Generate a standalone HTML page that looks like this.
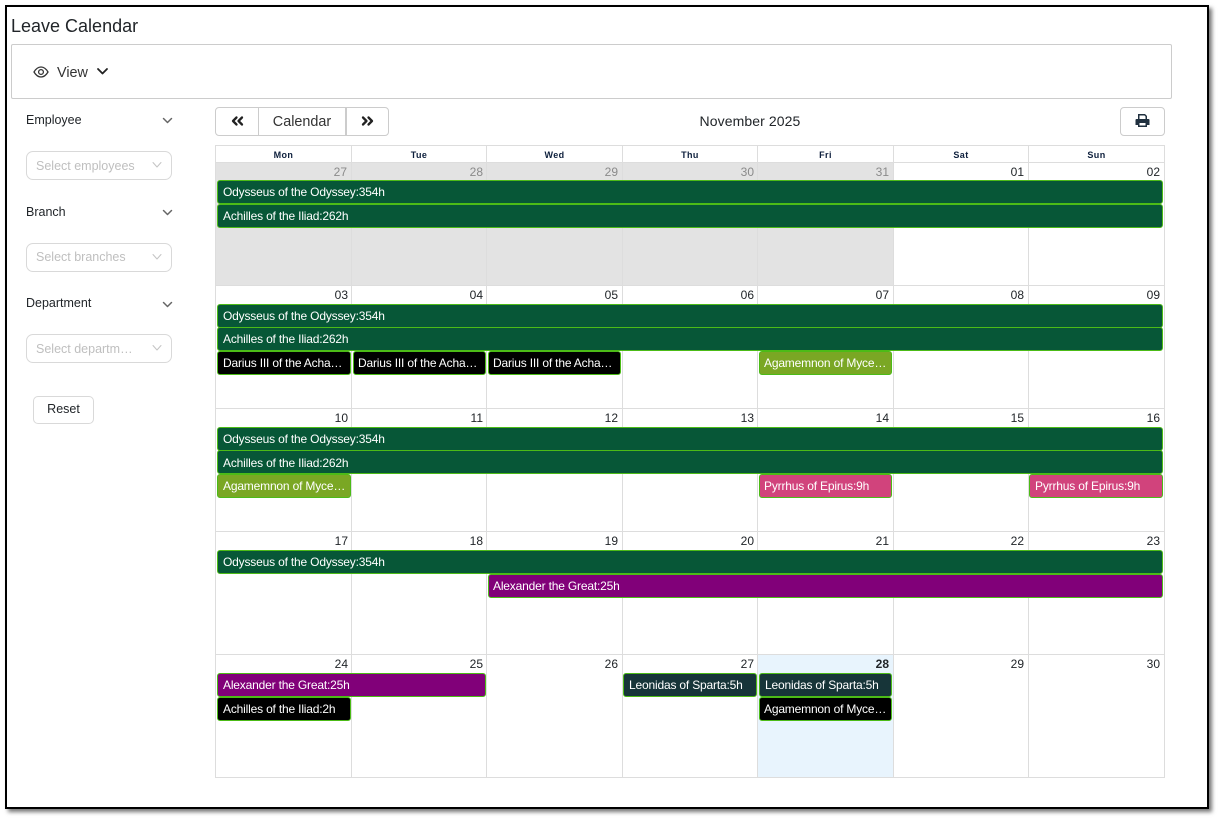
<!DOCTYPE html>
<html><head><meta charset="utf-8"><style>
*{box-sizing:border-box}
html,body{margin:0;padding:0;background:#fff;width:1218px;height:818px;overflow:hidden;font-family:"Liberation Sans",sans-serif;color:#212529}
.a{position:absolute}
.frame{left:5px;top:5px;width:1204px;height:804px;border:2px solid #000;box-shadow:3px 3px 4px #777;background:#fff}
.lbl{font-size:12.5px;left:26px;color:#212529;line-height:14px}
.sel{left:26px;width:146px;height:29px;border:1px solid #d9d9d9;border-radius:7px;color:#bfbfbf;font-size:12.500px;line-height:27px;padding-left:9px}
.v{stroke-linecap:round;stroke-linejoin:round;fill:none}
.hd{top:145px;height:18px;border:1px solid #ddd;font-size:9px;font-weight:bold;text-align:center;line-height:18px;color:#0d1f3c;letter-spacing:.4px}
.hl{height:1px;background:#ddd;left:215px;width:950px}
.vl{width:1px;background:#ddd;top:145px;height:633px}
.n{font-size:12px;width:40px;text-align:right;line-height:14px;color:#212529}
.e{height:24px;border:1px solid #4cbb17;border-radius:3px;color:#fff;font-size:12px;letter-spacing:-.18px;line-height:22px;padding-left:5px;white-space:nowrap;overflow:hidden}
.s{padding-left:4px}
.g{background:#075737}.k{background:#000}.o{background:#7aa724}.p{background:#d1437c}.m{background:#810079}.t{background:#173539}
</style></head><body>
<div class="a frame"></div>
<div class="a" style="left:11px;top:15px;font-size:18px;line-height:22px;color:#212529">Leave Calendar</div>
<div class="a" style="left:11px;top:44px;width:1161px;height:55px;border:1px solid #ccc;border-radius:2px"></div>
<svg class="a" style="left:33px;top:65px" width="16" height="14" viewBox="0 0 16 14"><path d="M1 7C3 3.6 5.2 2 8 2s5 1.6 7 5c-2 3.4-4.200 5-7 5S3 10.400 1 7z" fill="none" stroke="#333" stroke-width="1.300"/><circle cx="8" cy="7" r="2.400" fill="none" stroke="#333" stroke-width="1.300"/></svg>
<div class="a" style="left:57px;top:65px;font-size:14.400px;line-height:16px;color:#333">View</div>
<svg class="a" style="left:96px;top:67px" width="13" height="9"><path class="v" d="M2 2l4.500 4.500L11 2" stroke="#222" stroke-width="1.800"/></svg>

<div class="a lbl" style="top:113px">Employee</div>
<svg class="a" style="left:161px;top:116px" width="13" height="9"><path class="v" d="M2.500 2.500l4 4 4-4" stroke="#666" stroke-width="1.500"/></svg>
<div class="a sel" style="top:151px;line-height:28px">Select employees</div>
<svg class="a" style="left:151px;top:161px" width="12" height="8"><path class="v" d="M2 1.500l4 4.500 4-4.500" stroke="#c4c4c4"/></svg>
<div class="a lbl" style="top:205px">Branch</div>
<svg class="a" style="left:161px;top:208px" width="13" height="9"><path class="v" d="M2.500 2.500l4 4 4-4" stroke="#666" stroke-width="1.500"/></svg>
<div class="a sel" style="top:243px">Select branches</div>
<svg class="a" style="left:151px;top:253px" width="12" height="8"><path class="v" d="M2 1.500l4 4.500 4-4.500" stroke="#c4c4c4"/></svg>
<div class="a lbl" style="top:296px">Department</div>
<svg class="a" style="left:161px;top:300px" width="13" height="9"><path class="v" d="M2.500 2.500l4 4 4-4" stroke="#666" stroke-width="1.500"/></svg>
<div class="a sel" style="top:334px;line-height:28px">Select departm…</div>
<svg class="a" style="left:151px;top:344px" width="12" height="8"><path class="v" d="M2 1.500l4 4.500 4-4.500" stroke="#c4c4c4"/></svg>
<div class="a" style="left:33px;top:396px;width:61px;height:28px;border:1px solid #d9d9d9;border-radius:5px;font-size:12.500px;line-height:25px;text-align:center;color:#212529">Reset</div>

<div class="a" style="left:215px;top:107px;width:174px;height:29px;border:1px solid #ccc;border-radius:4px"></div>
<div class="a" style="left:258px;top:107px;width:1px;height:29px;background:#ccc"></div>
<div class="a" style="left:345px;top:107px;width:2px;height:29px;background:#ccc"></div>
<svg class="a" style="left:231px;top:115px" width="13" height="12"><path class="v" d="M5.500 2.500L2 6l3.500 3.500M11 2.500L7.500 6 11 9.500" stroke="#222" stroke-width="2.300"/></svg>
<div class="a" style="left:259px;top:114px;width:86px;text-align:center;font-size:14.400px;line-height:16px;color:#333">Calendar</div>
<svg class="a" style="left:361px;top:115px" width="13" height="12"><path class="v" d="M2 2.500L5.500 6 2 9.500M7.500 2.500L11 6l-3.500 3.500" stroke="#222" stroke-width="2.300"/></svg>
<div class="a" style="left:589px;width:322px;top:113px;text-align:center;font-size:14px;letter-spacing:.1px;line-height:16px;color:#212529">November 2025</div>
<div class="a" style="left:1120px;top:107px;width:45px;height:29px;border:1px solid #ccc;border-radius:4px"></div>
<svg class="a" style="left:1135px;top:113px" width="15" height="15" viewBox="0 0 15 15"><path d="M3 1h7l2 2v3h1.500a1 1 0 0 1 1 1v5h-2.500v2H3v-2H.5V7a1 1 0 0 1 1-1H3zM4.500 2.500V6h6V3.500L9.500 2.500zM4.500 10v2.500h6V10z" fill="#20303f" fill-rule="evenodd"/></svg>

<!-- header -->
<div class="a hd" style="left:215px;width:137px">Mon</div>
<div class="a hd" style="left:351px;width:136px">Tue</div>
<div class="a hd" style="left:486px;width:137px">Wed</div>
<div class="a hd" style="left:622px;width:136px">Thu</div>
<div class="a hd" style="left:757px;width:137px">Fri</div>
<div class="a hd" style="left:893px;width:136px">Sat</div>
<div class="a hd" style="left:1028px;width:137px">Sun</div>

<!-- shaded -->
<div class="a" style="left:216px;top:163px;width:677px;height:122px;background:#e3e3e3"></div>
<div class="a" style="left:758px;top:655px;width:135px;height:122px;background:#e8f4fd"></div>

<!-- lines -->
<div class="a hl" style="top:162px"></div><div class="a hl" style="top:285px"></div><div class="a hl" style="top:408px"></div><div class="a hl" style="top:531px"></div><div class="a hl" style="top:654px"></div><div class="a hl" style="top:777px"></div>
<div class="a vl" style="left:215px"></div><div class="a vl" style="left:351px"></div><div class="a vl" style="left:486px"></div><div class="a vl" style="left:622px"></div><div class="a vl" style="left:757px"></div><div class="a vl" style="left:893px"></div><div class="a vl" style="left:1028px"></div><div class="a vl" style="left:1164px"></div>

<!-- numbers row 1 -->
<div class="a n" style="left:307px;top:165px;color:#8a8a8a">27</div><div class="a n" style="left:443px;top:165px;color:#8a8a8a">28</div><div class="a n" style="left:578px;top:165px;color:#8a8a8a">29</div><div class="a n" style="left:714px;top:165px;color:#8a8a8a">30</div><div class="a n" style="left:849px;top:165px;color:#8a8a8a">31</div><div class="a n" style="left:984px;top:165px">01</div><div class="a n" style="left:1120px;top:165px">02</div>
<!-- row 2 -->
<div class="a n" style="left:308px;top:288px">03</div><div class="a n" style="left:443px;top:288px">04</div><div class="a n" style="left:578px;top:288px">05</div><div class="a n" style="left:714px;top:288px">06</div><div class="a n" style="left:849px;top:288px">07</div><div class="a n" style="left:984px;top:288px">08</div><div class="a n" style="left:1120px;top:288px">09</div>
<!-- row 3 -->
<div class="a n" style="left:308px;top:411px">10</div><div class="a n" style="left:443px;top:411px">11</div><div class="a n" style="left:578px;top:411px">12</div><div class="a n" style="left:714px;top:411px">13</div><div class="a n" style="left:849px;top:411px">14</div><div class="a n" style="left:984px;top:411px">15</div><div class="a n" style="left:1120px;top:411px">16</div>
<!-- row 4 -->
<div class="a n" style="left:308px;top:534px">17</div><div class="a n" style="left:443px;top:534px">18</div><div class="a n" style="left:578px;top:534px">19</div><div class="a n" style="left:714px;top:534px">20</div><div class="a n" style="left:849px;top:534px">21</div><div class="a n" style="left:984px;top:534px">22</div><div class="a n" style="left:1120px;top:534px">23</div>
<!-- row 5 -->
<div class="a n" style="left:308px;top:657px">24</div><div class="a n" style="left:443px;top:657px">25</div><div class="a n" style="left:578px;top:657px">26</div><div class="a n" style="left:714px;top:657px">27</div><div class="a n" style="left:849px;top:657px;font-weight:bold">28</div><div class="a n" style="left:984px;top:657px">29</div><div class="a n" style="left:1120px;top:657px">30</div>

<!-- events -->
<div class="a e g" style="left:217px;top:180px;width:946px">Odysseus of the Odyssey:354h</div>
<div class="a e g" style="left:217px;top:204px;width:946px">Achilles of the Iliad:262h</div>
<div class="a e g" style="left:217px;top:304px;width:946px">Odysseus of the Odyssey:354h</div>
<div class="a e g" style="left:217px;top:327px;width:946px">Achilles of the Iliad:262h</div>
<div class="a e k" style="left:217px;top:351px;width:134px">Darius III of the Acha…</div>
<div class="a e k s" style="left:353px;top:351px;width:133px">Darius III of the Acha…</div>
<div class="a e k s" style="left:488px;top:351px;width:133px">Darius III of the Acha…</div>
<div class="a e o s" style="left:759px;top:351px;width:133px">Agamemnon of Myce…</div>
<div class="a e g" style="left:217px;top:427px;width:946px">Odysseus of the Odyssey:354h</div>
<div class="a e g" style="left:217px;top:450px;width:946px;line-height:24px">Achilles of the Iliad:262h</div>
<div class="a e o" style="left:217px;top:474px;width:134px">Agamemnon of Myce…</div>
<div class="a e p s" style="left:759px;top:474px;width:133px">Pyrrhus of Epirus:9h</div>
<div class="a e p" style="left:1029px;top:474px;width:134px">Pyrrhus of Epirus:9h</div>
<div class="a e g" style="left:217px;top:550px;width:946px">Odysseus of the Odyssey:354h</div>
<div class="a e m s" style="left:488px;top:574px;width:675px">Alexander the Great:25h</div>
<div class="a e m" style="left:217px;top:673px;width:269px">Alexander the Great:25h</div>
<div class="a e k" style="left:217px;top:697px;width:134px">Achilles of the Iliad:2h</div>
<div class="a e t" style="left:623px;top:673px;width:134px">Leonidas of Sparta:5h</div>
<div class="a e t" style="left:759px;top:673px;width:133px">Leonidas of Sparta:5h</div>
<div class="a e k s" style="left:759px;top:697px;width:133px">Agamemnon of Myce…</div>
</body></html>
